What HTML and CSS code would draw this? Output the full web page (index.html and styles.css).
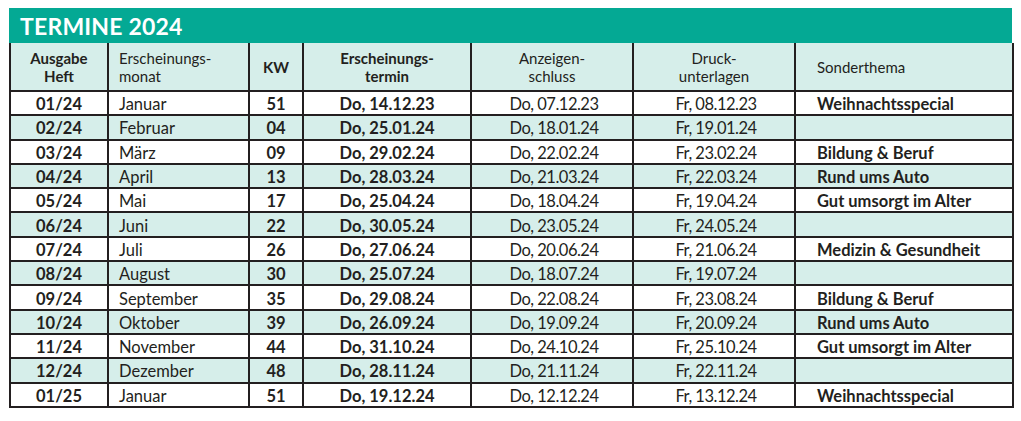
FILE: index.html
```html
<!DOCTYPE html>
<html lang="de">
<head>
<meta charset="utf-8">
<title>Termine 2024</title>
<link rel="stylesheet" href="styles.css">
</head>
<body>
<div class="sheet">
  <div class="title">TERMINE 2024</div>
  <table class="plan">
    <colgroup>
      <col class="c1"><col class="c2"><col class="c3"><col class="c4"><col class="c5"><col class="c6"><col class="c7">
    </colgroup>
    <thead>
      <tr>
        <th class="b">Ausgabe<br>Heft</th>
        <th class="l">Erscheinungs-<br>monat</th>
        <th class="b">KW</th>
        <th class="b">Erscheinungs-<br>termin</th>
        <th>Anzeigen-<br>schluss</th>
        <th>Druck-<br>unterlagen</th>
        <th class="l s">Sonderthema</th>
      </tr>
    </thead>
    <tbody>
      <tr><td class="b">01/24</td><td class="l">Januar</td><td class="b">51</td><td class="b">Do, 14.12.23</td><td class="d">Do, 07.12.23</td><td class="d">Fr, 08.12.23</td><td class="l b s">Weihnachtsspecial</td></tr>
      <tr class="alt"><td class="b">02/24</td><td class="l">Februar</td><td class="b">04</td><td class="b">Do, 25.01.24</td><td class="d">Do, 18.01.24</td><td class="d">Fr, 19.01.24</td><td class="l b s"></td></tr>
      <tr><td class="b">03/24</td><td class="l">März</td><td class="b">09</td><td class="b">Do, 29.02.24</td><td class="d">Do, 22.02.24</td><td class="d">Fr, 23.02.24</td><td class="l b s">Bildung &amp; Beruf</td></tr>
      <tr class="alt"><td class="b">04/24</td><td class="l">April</td><td class="b">13</td><td class="b">Do, 28.03.24</td><td class="d">Do, 21.03.24</td><td class="d">Fr, 22.03.24</td><td class="l b s">Rund ums Auto</td></tr>
      <tr><td class="b">05/24</td><td class="l">Mai</td><td class="b">17</td><td class="b">Do, 25.04.24</td><td class="d">Do, 18.04.24</td><td class="d">Fr, 19.04.24</td><td class="l b s">Gut umsorgt im Alter</td></tr>
      <tr class="alt"><td class="b">06/24</td><td class="l">Juni</td><td class="b">22</td><td class="b">Do, 30.05.24</td><td class="d">Do, 23.05.24</td><td class="d">Fr, 24.05.24</td><td class="l b s"></td></tr>
      <tr><td class="b">07/24</td><td class="l">Juli</td><td class="b">26</td><td class="b">Do, 27.06.24</td><td class="d">Do, 20.06.24</td><td class="d">Fr, 21.06.24</td><td class="l b s">Medizin &amp; Gesundheit</td></tr>
      <tr class="alt"><td class="b">08/24</td><td class="l">August</td><td class="b">30</td><td class="b">Do, 25.07.24</td><td class="d">Do, 18.07.24</td><td class="d">Fr, 19.07.24</td><td class="l b s"></td></tr>
      <tr><td class="b">09/24</td><td class="l">September</td><td class="b">35</td><td class="b">Do, 29.08.24</td><td class="d">Do, 22.08.24</td><td class="d">Fr, 23.08.24</td><td class="l b s">Bildung &amp; Beruf</td></tr>
      <tr class="alt"><td class="b">10/24</td><td class="l">Oktober</td><td class="b">39</td><td class="b">Do, 26.09.24</td><td class="d">Do, 19.09.24</td><td class="d">Fr, 20.09.24</td><td class="l b s">Rund ums Auto</td></tr>
      <tr><td class="b">11/24</td><td class="l">November</td><td class="b">44</td><td class="b">Do, 31.10.24</td><td class="d">Do, 24.10.24</td><td class="d">Fr, 25.10.24</td><td class="l b s">Gut umsorgt im Alter</td></tr>
      <tr class="alt"><td class="b">12/24</td><td class="l">Dezember</td><td class="b">48</td><td class="b">Do, 28.11.24</td><td class="d">Do, 21.11.24</td><td class="d">Fr, 22.11.24</td><td class="l b s"></td></tr>
      <tr><td class="b">01/25</td><td class="l">Januar</td><td class="b">51</td><td class="b">Do, 19.12.24</td><td class="d">Do, 12.12.24</td><td class="d">Fr, 13.12.24</td><td class="l b s">Weihnachtsspecial</td></tr>
    </tbody>
  </table>
</div>
</body>
</html>
```

FILE: styles.css
```css
html, body {
  margin: 0;
  padding: 0;
  background: #ffffff;
}

body {
  font-family: "Lato", "Open Sans", "Liberation Sans", sans-serif;
  color: #231f20;
}

.sheet {
  width: 1003px;
  margin: 8px 0 0 9px;
}

.title {
  background: #04a994;
  color: #ffffff;
  font-weight: 700;
  font-size: 23px;
  height: 35px;
  line-height: 36px;
  padding-left: 11px;
  letter-spacing: 0.2px;
}

.plan {
  width: 1003px;
  border-collapse: collapse;
  table-layout: fixed;
  border-left: 2px solid #231f20;
  border-right: 2px solid #231f20;
  border-bottom: 2px solid #231f20;
}

.c1 { width: 98px; }
.c2 { width: 141px; }
.c3 { width: 54px; }
.c4 { width: 168px; }
.c5 { width: 162px; }
.c6 { width: 162px; }
.c7 { width: 218px; }

.plan th,
.plan td {
  border: 2px solid #231f20;
  padding: 0;
  text-align: center;
  vertical-align: middle;
  white-space: nowrap;
}

.plan th {
  background: #d6eeea;
  font-size: 15px;
  font-weight: 400;
  line-height: 18px;
  height: 46px;
  padding-top: 1px;
  border-top: 0;
}

.plan td {
  font-size: 16.5px;
  height: 20.3px;
  padding-top: 2px;
  line-height: 18px;
}

.plan .alt td {
  background: #d6eeea;
}

.plan .b { font-weight: 700; }
.plan .d { letter-spacing: -0.5px; padding-left: 4px; }
.plan .l { text-align: left; padding-left: 10px; }
.plan .s { padding-left: 21px; }
```
